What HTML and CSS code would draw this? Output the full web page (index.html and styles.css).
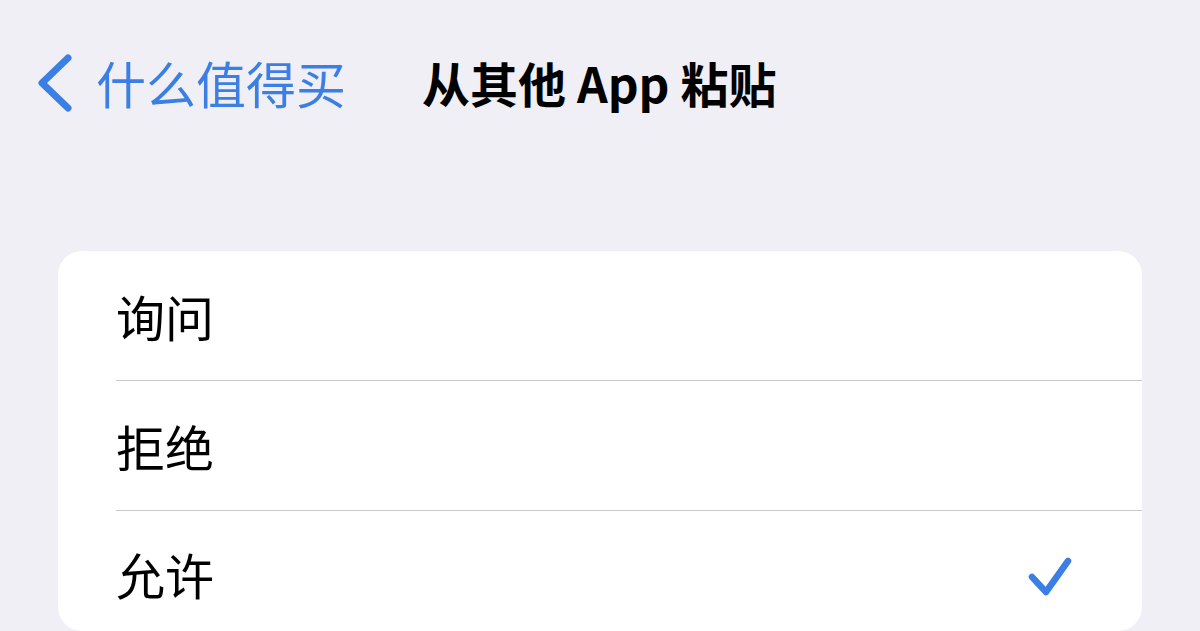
FILE: index.html
```html
<!DOCTYPE html>
<html lang="zh-CN">
  <head>
    <meta charset="UTF-8" />
    <meta name="viewport" content="width=device-width, initial-scale=1.0" />
    <title>从其他 App 粘贴</title>
    <link rel="stylesheet" href="styles.css">
  </head>
  <body>
    <!-- 顶部导航 -->
    <div class="nav">
      <a href="#" class="back">
        <svg class="chevron" width="36" height="60" viewBox="0 0 36 60">
          <path d="M31 5 L5 30 L31 55" fill="none" stroke="currentColor" stroke-width="7" stroke-linecap="round" stroke-linejoin="round" />
        </svg>
        <span>什么值得买</span>
      </a>
      <h1 class="title">从其他 App 粘贴</h1>
    </div>

    <!-- 选项列表 -->
    <ul class="options">
      <li><span>询问</span></li>
      <li><span>拒绝</span></li>
      <li class="checked">
        <span>允许</span>
        <svg class="check" width="48" height="46" viewBox="0 0 48 46">
          <path d="M6 23 L20 38 L42 7" fill="none" stroke="currentColor" stroke-width="6.5" stroke-linecap="round" stroke-linejoin="round" />
        </svg>
      </li>
    </ul>
  </body>
</html>
```

FILE: styles.css
```css
* {
  margin: 0;
  padding: 0;
}

ul {
  list-style: none;
}

body {
  background-color: #f0eff5;
  font-family: "Noto Sans CJK SC", "Noto Sans", sans-serif;
  color: #000;
  overflow: hidden;
  height: 631px;
}

/* 导航栏 */
.nav {
  height: 164px;
  display: flex;
  align-items: center;
  padding-left: 37px;
}
.back {
  display: flex;
  align-items: center;
  color: #3b7fe4;
  text-decoration: none;
  font-size: 50px;
}
.chevron {
  margin-right: 23px;
  margin-top: 2px;
}
.back span {
  line-height: 1;
}
.title {
  margin-left: 76px;
  font-size: 48px;
  font-weight: 700;
  line-height: 1;
}

/* 列表卡片 */
.options {
  margin: 87px 58px 0;
  background-color: #fff;
  border-radius: 24px;
  height: 380px;
  overflow: hidden;
}
.options li {
  height: 130px;
  margin-left: 58px;
  padding-right: 68px;
  display: flex;
  align-items: center;
  justify-content: space-between;
  border-bottom: 1px solid #c9c9cc;
  font-size: 49px;
  box-sizing: border-box;
}
.options li:last-child {
  border-bottom: none;
  height: 120px;
  padding-top: 4px;
}
.options li span {
  line-height: 1;
}
.check {
  color: #3b7fe4;
  margin-top: 8px;
}
```
